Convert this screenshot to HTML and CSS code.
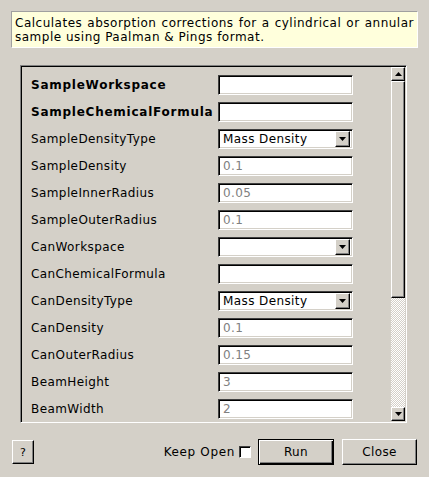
FILE: index.html
```html
<!DOCTYPE html>
<html>
<head>
<meta charset="utf-8">
<link rel="stylesheet" href="styles.css">
</head>
<body>
<div class="dialog">
  <div class="desc">Calculates absorption corrections for a cylindrical or annular sample using Paalman &amp; Pings format.</div>
  <div class="frame">
    <div class="rows">
      <div class="lbl bold">SampleWorkspace</div><div class="field"></div>
      <div class="lbl bold">SampleChemicalFormula</div><div class="field"></div>
      <div class="lbl">SampleDensityType</div><div class="combo"><span class="ctext">Mass Density</span><span class="cbtn"><svg width="7" height="4" viewBox="0 0 7 4"><polygon points="0,0 7,0 3.5,4" fill="#000"/></svg></span></div>
      <div class="lbl">SampleDensity</div><div class="field ph">0.1</div>
      <div class="lbl">SampleInnerRadius</div><div class="field ph">0.05</div>
      <div class="lbl">SampleOuterRadius</div><div class="field ph">0.1</div>
      <div class="lbl">CanWorkspace</div><div class="combo"><span class="ctext"></span><span class="cbtn"><svg width="7" height="4" viewBox="0 0 7 4"><polygon points="0,0 7,0 3.5,4" fill="#000"/></svg></span></div>
      <div class="lbl">CanChemicalFormula</div><div class="field"></div>
      <div class="lbl">CanDensityType</div><div class="combo"><span class="ctext">Mass Density</span><span class="cbtn"><svg width="7" height="4" viewBox="0 0 7 4"><polygon points="0,0 7,0 3.5,4" fill="#000"/></svg></span></div>
      <div class="lbl">CanDensity</div><div class="field ph">0.1</div>
      <div class="lbl">CanOuterRadius</div><div class="field ph">0.15</div>
      <div class="lbl">BeamHeight</div><div class="field ph">3</div>
      <div class="lbl">BeamWidth</div><div class="field ph">2</div>
    </div>
    <div class="sbar">
      <div class="sbtn"><svg width="7" height="4" viewBox="0 0 7 4"><polygon points="3.5,0 7,4 0,4" fill="#000"/></svg></div>
      <div class="slider"></div>
      <div class="track"></div>
      <div class="sbtn"><svg width="7" height="4" viewBox="0 0 7 4"><polygon points="0,0 7,0 3.5,4" fill="#000"/></svg></div>
    </div>
  </div>
  <div class="bottom">
    <div class="btn help">?</div>
    <div class="spacer"></div>
    <div class="keep">Keep Open</div>
    <div class="check"></div>
    <div class="btn run">Run</div>
    <div class="btn close">Close</div>
  </div>
</div>
</body>
</html>
```
FILE: styles.css
```css
html, body {
  margin: 0;
  padding: 0;
  background: #d4d0c8;
}
body {
  width: 429px;
  height: 477px;
  overflow: hidden;
  font-family: "DejaVu Sans", sans-serif;
  font-size: 12px;
  letter-spacing: 0.4px;
  color: #000;
}
.dialog {
  display: flex;
  flex-direction: column;
  padding-top: 11px;
}
.desc {
  margin-left: 11px;
  width: 407px;
  box-sizing: border-box;
  background: #ffffdc;
  border: 1px solid;
  border-color: #a0a0a0 #ffffff #ffffff #a0a0a0;
  padding: 4px 3px 3px 3px;
  line-height: 14px;
  text-align: justify;
  letter-spacing: 0.5px;
}
.frame {
  margin-top: 17px;
  margin-left: 20px;
  width: 387px;
  height: 358px;
  box-sizing: border-box;
  border: 1px solid;
  border-color: #808080 #ffffff #ffffff #808080;
  box-shadow: inset 1px 1px 0 #000, inset -1px -1px 0 #d4d0c8;
  padding: 1px;
  display: flex;
  overflow: hidden;
}
.rows {
  flex: 1;
  display: grid;
  grid-template-columns: 187px 135px;
  grid-auto-rows: 20px;
  row-gap: 7px;
  padding: 8px 0 0 9px;
  align-content: start;
}
.lbl {
  display: flex;
  align-items: center;
  white-space: nowrap;
}
.bold {
  font-weight: bold;
  letter-spacing: 0.75px;
}
.field, .combo {
  box-sizing: border-box;
  height: 20px;
  background: #fff;
  border: 1px solid;
  border-color: #404040 #ffffff #ffffff #404040;
  box-shadow: inset 1px 1px 0 #000, inset -1px -1px 0 #d4d0c8;
  display: flex;
  align-items: center;
  padding-left: 4px;
}
.ph { color: #808080; }
.combo {
  padding: 1px 2px 1px 4px;
  justify-content: space-between;
  align-items: stretch;
}
.ctext {
  display: flex;
  align-items: center;
}
.cbtn {
  width: 15px;
  box-sizing: border-box;
  background: #d4d0c8;
  border: 1px solid;
  border-color: #ffffff #000 #000 #ffffff;
  box-shadow: inset -1px -1px 0 #808080;
  display: flex;
  align-items: center;
  justify-content: center;
}
.sbar {
  width: 14px;
  display: flex;
  flex-direction: column;
}
.sbtn, .slider {
  box-sizing: border-box;
  background: #d4d0c8;
  border: 1px solid;
  border-color: #ffffff #000 #000 #ffffff;
  box-shadow: inset -1px -1px 0 #808080;
}
.sbtn {
  height: 14px;
  display: flex;
  align-items: center;
  justify-content: center;
}
.slider {
  height: 217px;
}
.track {
  flex: 1;
  background: repeating-conic-gradient(#ffffff 0 25%, #d4d0c8 0 50%) 0 0 / 2px 2px;
}
.bottom {
  margin-top: 16px;
  height: 26px;
  display: flex;
  align-items: center;
  padding: 0 12px;
}
.spacer { flex: 1; }
.btn {
  box-sizing: border-box;
  background: #d4d0c8;
  border: 1px solid;
  border-color: #ffffff #000 #000 #ffffff;
  box-shadow: inset -1px -1px 0 #808080;
  display: flex;
  align-items: center;
  justify-content: center;
}
.help {
  width: 22px;
  height: 24px;
  font-size: 11px;
}
.keep {
  margin-right: 4px;
  letter-spacing: 0.65px;
}
.check {
  width: 12px;
  height: 12px;
  box-sizing: border-box;
  background: #fff;
  border: 1px solid;
  border-color: #404040 #ffffff #ffffff #404040;
  box-shadow: inset 1px 1px 0 #000;
  margin-right: 7px;
}
.run {
  width: 76px;
  height: 26px;
  border: 1px solid #000;
  box-shadow: inset 1px 1px 0 #fff, inset -1px -1px 0 #000, inset -2px -2px 0 #808080;
  margin-right: 8px;
}
.close {
  width: 75px;
  height: 26px;
}
```
